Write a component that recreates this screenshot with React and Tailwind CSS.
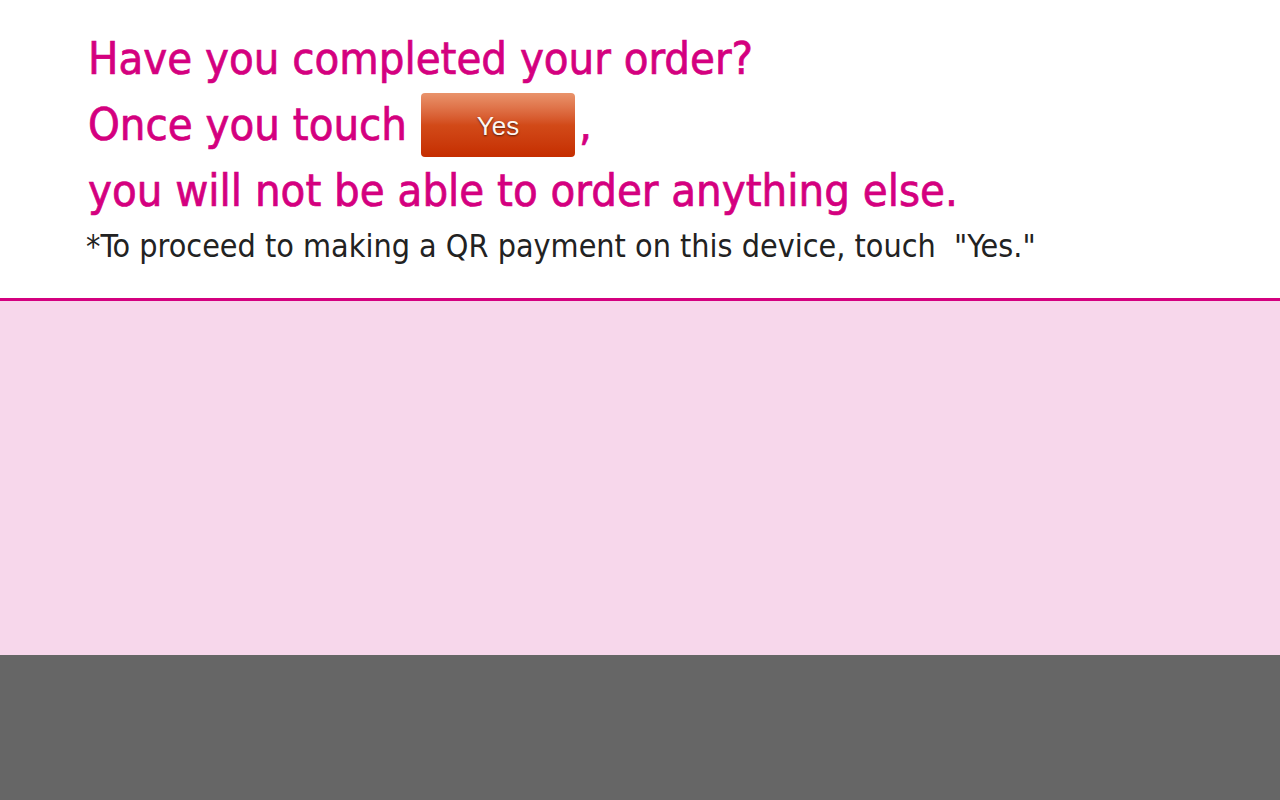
export default function App() {
  return (
    <div className="w-[1280px] h-[800px] flex flex-col bg-white overflow-hidden" style={{ fontFamily: '"DejaVu Sans Condensed", "Liberation Sans", sans-serif' }}>
      <div className="h-[298px] pl-[88px] pt-[26px]">
        <h1 className="text-[#d4007f] text-[45px] leading-[66px] font-normal [-webkit-text-stroke:0.7px_#d4007f]">
          <div>Have you completed your order?</div>
          <div className="flex items-center">
            <span>Once you touch</span>
            <button className="ml-[14px] w-[154px] h-[64px] rounded-[4px] bg-gradient-to-b from-[#e9936b] via-[#d24a18] to-[#c52d00] text-[#fdf6f2] text-[26px] font-['Liberation_Sans',sans-serif] [-webkit-text-stroke:0] [text-shadow:0_1px_2px_rgba(0,0,0,0.6)]">
              Yes
            </button>
            <span className="ml-[4px]">,</span>
          </div>
          <div>you will not be able to order anything else.</div>
        </h1>
        <p className="text-[#222] text-[32px] leading-[40px] mt-[2px] -ml-[2px] whitespace-pre">*To proceed to making a QR payment on this device, touch  "Yes."</p>
      </div>
      <div className="h-[3px] bg-[#d4007f]" />
      <div className="h-[354px] bg-[#f7d7eb]" />
      <div className="flex-1 bg-[#666666]" />
    </div>
  )
}
